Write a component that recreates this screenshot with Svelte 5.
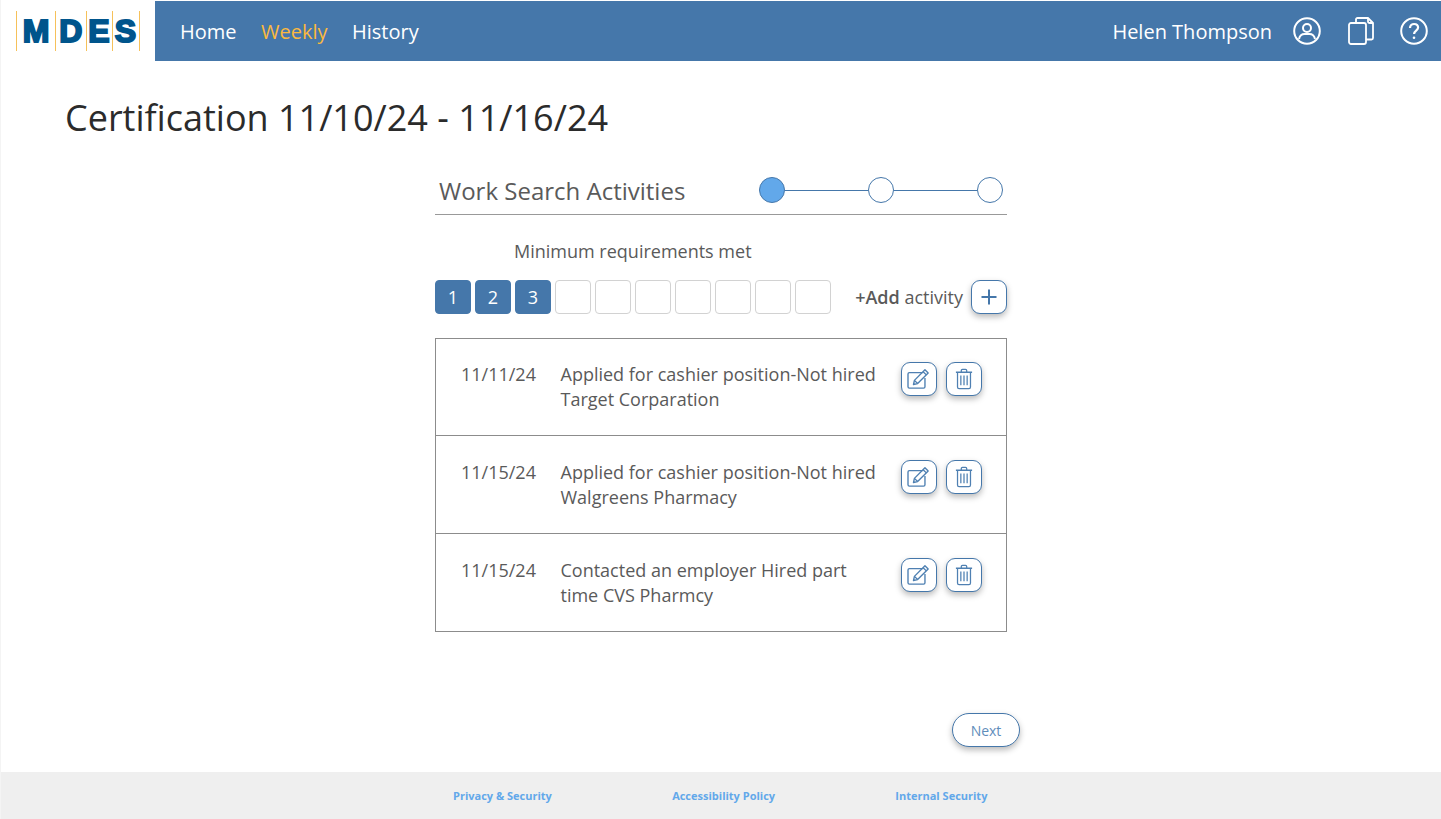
<script>
	const navItems = [
		{ label: 'Home', active: false },
		{ label: 'Weekly', active: true },
		{ label: 'History', active: false }
	];

	const slots = [1, 2, 3, null, null, null, null, null, null, null];

	const activities = [
		{ date: '11/11/24', lines: ['Applied for cashier position-Not hired', 'Target Corparation'] },
		{ date: '11/15/24', lines: ['Applied for cashier position-Not hired', 'Walgreens Pharmacy'] },
		{ date: '11/15/24', lines: ['Contacted an employer Hired part', 'time CVS Pharmcy'] }
	];

	const footerLinks = ['Privacy & Security', 'Accessibility Policy', 'Internal Security'];
</script>

<div class="page">
	<header>
		<div class="logo">
			<span class="bar"></span><span class="letter m">M</span><span class="bar"></span><span class="letter d">D</span><span class="bar"></span><span class="letter e">E</span><span class="bar"></span><span class="letter s">S</span><span class="bar"></span>
		</div>
		<nav class="topbar">
			<div class="nav-links">
				{#each navItems as item}
					<span class="nav-link" class:active={item.active}>{item.label}</span>
				{/each}
			</div>
			<div class="user">
				<span class="user-name">Helen Thompson</span>
				<svg class="top-icon" width="28" height="28" viewBox="0 0 28 28" fill="none" stroke="#fff" stroke-width="2">
					<circle cx="14" cy="14" r="12.8" />
					<circle cx="14" cy="11" r="4" />
					<path d="M6 22c.8-3.6 3.4-5 5.6-5h4.8c2.2 0 4.8 1.400 5.600 5" />
				</svg>
				<svg class="top-icon docs" width="26" height="28" viewBox="0 0 26 28" fill="none" stroke="#fff" stroke-width="1.800" stroke-linejoin="round">
					<path d="M8 6V2.500C8 1.700 8.700 1 9.500 1H20l5 5v15c0 .8-.7 1.500-1.500 1.500H18" />
					<path d="M20 1v3.500c0 .8.7 1.500 1.500 1.500H25" />
					<rect x="1" y="6" width="17" height="21" rx="2" />
				</svg>
				<svg class="top-icon" width="28" height="28" viewBox="0 0 28 28" fill="none" stroke="#fff" stroke-width="2">
					<circle cx="14" cy="14" r="12.800" />
					<path d="M10 11c0-2.400 1.800-4 4.100-4 2.300 0 4 1.500 4 3.600 0 3-4 3.200-4 6.400" stroke-width="2.200" />
					<circle cx="14" cy="20.800" r="1.300" fill="#fff" stroke="none" />
				</svg>
			</div>
		</nav>
	</header>

	<main>
		<h1>Certification 11/10/24 - 11/16/24</h1>

		<section class="panel">
			<div class="panel-head">
				<h2>Work Search Activities</h2>
				<div class="stepper">
					<span class="step current"></span>
					<span class="step-line"></span>
					<span class="step"></span>
					<span class="step-line"></span>
					<span class="step"></span>
				</div>
			</div>

			<p class="requirements">Minimum requirements met</p>

			<div class="progress-row">
				<div class="slots">
					{#each slots as slot}
						<span class="slot" class:filled={slot}>{slot ?? ''}</span>
					{/each}
				</div>
				<div class="add">
					<span class="add-label"><b>+Add</b> activity</span>
					<button class="icon-btn" aria-label="Add activity">
						<svg width="18" height="18" viewBox="0 0 18 18" stroke="#4577aa" stroke-width="2" fill="none">
							<path d="M9 1.500v15M1.500 9h15" />
						</svg>
					</button>
				</div>
			</div>

			<div class="activity-list">
				{#each activities as activity}
					<div class="activity">
						<div class="date">{activity.date}</div>
						<div class="desc">
							{#each activity.lines as line}
								<div>{line}</div>
							{/each}
						</div>
						<div class="actions">
							<button class="icon-btn" aria-label="Edit">
								<svg width="24" height="22" viewBox="0 0 26 24" fill="none" stroke="#4f80b2" stroke-width="1.500" stroke-linejoin="round">
									<path d="M17 5H2.500C1.700 5 1 5.700 1 6.500v14c0 .8.7 1.500 1.500 1.500h15.500c.8 0 1.500-.7 1.500-1.500V11" />
									<path d="M8 13.500 19.500 2l3.500 3.500L11.500 17 7 18z" />
									<path d="M17.500 4l3.500 3.500M8 13.500l3.500 3.500" />
								</svg>
							</button>
							<button class="icon-btn" aria-label="Delete">
								<svg width="18" height="22" viewBox="0 0 20 24" fill="none" stroke="#4f80b2" stroke-width="1.400" stroke-linejoin="round">
									<path d="M1 4.500h18M7 4.500V2.500C7 1.700 7.500 1.200 8.300 1.200h3.400c.8 0 1.300.5 1.300 1.300v2" />
									<path d="M2.800 4.500v16.300c0 1 .7 1.800 1.700 1.800h11c1 0 1.700-.8 1.700-1.800V4.500" />
									<path d="M6.500 8v11M10 8v11M13.500 8v11" />
								</svg>
							</button>
						</div>
					</div>
				{/each}
			</div>
		</section>

		<div class="next-row">
			<button class="next">Next</button>
		</div>
	</main>

	<footer>
		{#each footerLinks as link}
			<span class="footer-link">{link}</span>
		{/each}
	</footer>
</div>

<style>
	:global(body) {
		margin: 0;
		background: #fff;
	}

	button {
		font-family: inherit;
		padding: 0;
		cursor: pointer;
	}

	.page {
		display: flex;
		flex-direction: column;
		height: 819px;
		overflow: hidden;
		font-family: 'Open Sans', sans-serif;
		color: #5a5a5a;
		border-left: 1px solid #f4f4f4;
		box-sizing: border-box;
	}

	header {
		display: flex;
		height: 60px;
		margin-top: 1px;
		flex-shrink: 0;
	}

	.logo {
		width: 154px;
		box-sizing: border-box;
		padding: 10px 0 0 15px;
		display: flex;
		align-items: flex-start;
		font-family: 'Liberation Sans', sans-serif;
		font-weight: 700;
		color: #00558c;
	}

	.bar {
		width: 1px;
		height: 40px;
		background: #f6c15a;
		flex-shrink: 0;
	}

	.letter {
		font-size: 32px;
		line-height: 40px;
		text-align: center;
		-webkit-text-stroke: 2px #00558c;
	}

	.letter.m {
		width: 38px;
	}

	.letter.d {
		width: 29.5px;
	}

	.letter.e {
		width: 25px;
	}

	.letter.s {
		width: 26px;
	}

	.topbar {
		flex: 1;
		background: #4577aa;
		display: flex;
		align-items: center;
		justify-content: space-between;
		padding: 0 13px 0 25px;
		color: #fff;
		font-size: 20px;
	}

	.nav-links {
		display: flex;
		gap: 24.5px;
	}

	.nav-link.active {
		color: #fbb93f;
	}

	.user {
		display: flex;
		align-items: center;
	}

	.user-name {
		margin-right: 21px;
	}

	.top-icon {
		display: block;
	}

	.top-icon.docs {
		margin: 0 26px 0 27px;
	}

	main {
		flex: 1;
		min-height: 0;
	}

	h1 {
		margin: 32px 0 0 64px;
		font-size: 36px;
		line-height: 49px;
		font-weight: 400;
		color: #2b2b2b;
	}

	.panel {
		width: 572px;
		margin: 22px 0 0 434px;
	}

	.panel-head {
		display: flex;
		align-items: center;
		justify-content: space-between;
		height: 50px;
		padding: 0 4px;
		border-bottom: 1px solid #999;
		box-sizing: content-box;
	}

	h2 {
		margin: 3px 0 0;
		font-size: 24px;
		font-weight: 400;
		color: #5a5a5a;
	}

	.stepper {
		display: flex;
		align-items: center;
		margin-top: 1px;
	}

	.step {
		width: 24px;
		height: 24px;
		border-radius: 50%;
		border: 1px solid #4577aa;
		background: #fff;
	}

	.step.current {
		background: #62a8ea;
	}

	.step-line {
		width: 83px;
		height: 1px;
		margin-top: 1px;
		background: #4577aa;
	}

	.requirements {
		margin: 24px 0 0 79px;
		font-size: 18px;
		line-height: 24px;
	}

	.progress-row {
		display: flex;
		justify-content: space-between;
		margin-top: 17px;
	}

	.slots {
		display: flex;
		gap: 4px;
	}

	.slot {
		width: 36px;
		height: 34px;
		box-sizing: border-box;
		border: 1px solid #d2d2d2;
		border-radius: 4px;
		display: flex;
		align-items: center;
		justify-content: center;
		font-size: 18px;
		color: #fff;
	}

	.slot.filled {
		background: #4577aa;
		border-color: #4577aa;
	}

	.add {
		display: flex;
		align-items: center;
		gap: 8px;
	}

	.add-label {
		font-size: 18px;
	}

	.add-label b {
		font-weight: 600;
	}

	.icon-btn {
		width: 36px;
		height: 34px;
		background: #fff;
		border: 1px solid #4577aa;
		border-radius: 9px;
		box-shadow: 0 3px 6px rgba(0, 0, 0, 0.28);
		display: flex;
		align-items: center;
		justify-content: center;
	}

	.activity-list {
		margin-top: 24px;
		border: 1px solid #8c8c8c;
	}

	.activity {
		display: flex;
		align-items: flex-start;
		height: 98px;
		box-sizing: border-box;
		font-size: 18px;
		line-height: 25px;
		padding: 24px 0 0 25px;
		border-top: 1px solid #8c8c8c;
	}

	.activity:first-child {
		height: 96px;
		padding-top: 23px;
		border-top: none;
	}

	.date {
		width: 99.5px;
	}

	.desc {
		width: 340.5px;
	}

	.actions {
		display: flex;
		gap: 9px;
	}

	.next-row {
		display: flex;
		margin: 81px 0 0 951px;
	}

	.next {
		width: 68px;
		height: 34px;
		border-radius: 17px;
		background: #fff;
		border: 1px solid #4577aa;
		box-shadow: 0 3px 6px rgba(0, 0, 0, 0.28);
		color: #5f8dbb;
		font-size: 14px;
	}

	footer {
		height: 47px;
		background: #efefef;
		display: flex;
		align-items: center;
		padding: 0 0 0 452px;
		gap: 120.25px;
		flex-shrink: 0;
	}

	.footer-link {
		font-size: 11px;
		font-weight: 700;
		color: #62a8ea;
	}
</style>
